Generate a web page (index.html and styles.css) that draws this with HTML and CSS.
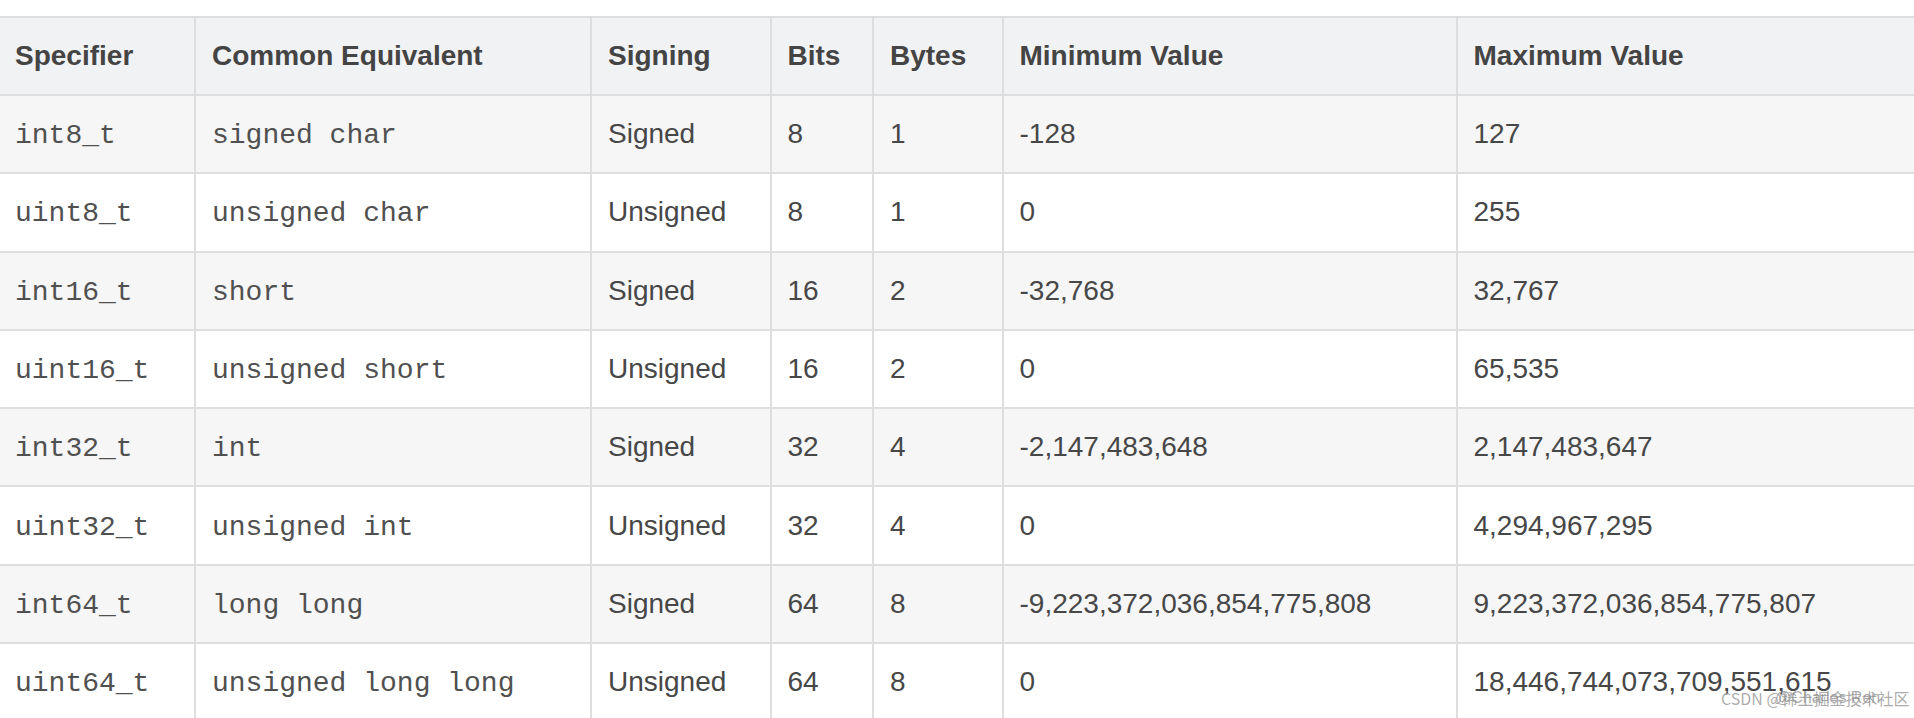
FILE: index.html
```html
<!DOCTYPE html>
<html lang="en">
<head>
<meta charset="utf-8">
<title>Fixed-width integer types</title>
<link rel="stylesheet" href="styles.css">
</head>
<body>
<div class="page">
  <table class="types">
    <colgroup>
      <col class="c-spec">
      <col class="c-common">
      <col class="c-sign">
      <col class="c-bits">
      <col class="c-bytes">
      <col class="c-min">
      <col class="c-max">
    </colgroup>
    <thead>
      <tr>
        <th>Specifier</th>
        <th>Common Equivalent</th>
        <th>Signing</th>
        <th>Bits</th>
        <th>Bytes</th>
        <th>Minimum Value</th>
        <th>Maximum Value</th>
      </tr>
    </thead>
    <tbody>
      <tr>
        <td class="code">int8_t</td><td class="code">signed char</td><td>Signed</td><td>8</td><td>1</td><td>-128</td><td>127</td>
      </tr>
      <tr>
        <td class="code">uint8_t</td><td class="code">unsigned char</td><td>Unsigned</td><td>8</td><td>1</td><td>0</td><td>255</td>
      </tr>
      <tr>
        <td class="code">int16_t</td><td class="code">short</td><td>Signed</td><td>16</td><td>2</td><td>-32,768</td><td>32,767</td>
      </tr>
      <tr>
        <td class="code">uint16_t</td><td class="code">unsigned short</td><td>Unsigned</td><td>16</td><td>2</td><td>0</td><td>65,535</td>
      </tr>
      <tr>
        <td class="code">int32_t</td><td class="code">int</td><td>Signed</td><td>32</td><td>4</td><td>-2,147,483,648</td><td>2,147,483,647</td>
      </tr>
      <tr>
        <td class="code">uint32_t</td><td class="code">unsigned int</td><td>Unsigned</td><td>32</td><td>4</td><td>0</td><td>4,294,967,295</td>
      </tr>
      <tr>
        <td class="code">int64_t</td><td class="code">long long</td><td>Signed</td><td>64</td><td>8</td><td>-9,223,372,036,854,775,808</td><td>9,223,372,036,854,775,807</td>
      </tr>
      <tr>
        <td class="code">uint64_t</td><td class="code">unsigned long long</td><td>Unsigned</td><td>64</td><td>8</td><td>0</td><td>18,446,744,073,709,551,615</td>
      </tr>
    </tbody>
  </table>
  <div class="watermark">
    <span class="wm-a">CSDN @稀土掘金技术社区</span>
    <span class="wm-b">@Charles Ren</span>
  </div>
</div>
</body>
</html>
```

FILE: styles.css
```css
html, body {
  margin: 0;
  padding: 0;
  background: #ffffff;
  overflow: hidden;
}

.page {
  position: relative;
  width: 1914px;
  height: 718px;
  overflow: hidden;
  padding-top: 16px;
  box-sizing: border-box;
}

.types {
  border-collapse: collapse;
  table-layout: fixed;
  width: 1960px;
  margin-left: -3px;
  font-family: "Liberation Sans", Arial, sans-serif;
  font-size: 28px;
  color: #474747;
}

.c-spec { width: 197px; }
.c-common { width: 396px; }
.c-sign { width: 179.5px; }
.c-bits { width: 102.5px; }
.c-bytes { width: 129.5px; }
.c-min { width: 454px; }
.c-max { width: 501px; }

.types th,
.types td {
  border: 2px solid #dedede;
  padding: 0 16px;
  text-align: left;
  vertical-align: middle;
  white-space: nowrap;
  line-height: 32px;
}

.types th {
  height: 76px;
  background: #f1f2f4;
  font-weight: bold;
  color: #444444;
}

.types td {
  height: 76.3px;
}

.types tbody tr:nth-child(odd) td {
  background: #f6f6f7;
}

.types tbody tr:nth-child(even) td {
  background: #ffffff;
}

.types td.code {
  font-family: "Liberation Mono", "Courier New", monospace;
  font-size: 28px;
  color: #505050;
  padding-top: 4px;
  height: 72.3px;
}

.watermark {
  position: absolute;
  left: 1721px;
  top: 686px;
  width: 190px;
  height: 26px;
  font-size: 16px;
  line-height: 24px;
  color: rgba(140, 140, 140, 0.72);
  white-space: nowrap;
}

.wm-a {
  position: absolute;
  left: 0;
  top: 0;
  font-family: "Noto Sans CJK SC", sans-serif;
}

.wm-b {
  position: absolute;
  left: 54px;
  top: 0;
  font-family: "Liberation Sans", sans-serif;
}
```
